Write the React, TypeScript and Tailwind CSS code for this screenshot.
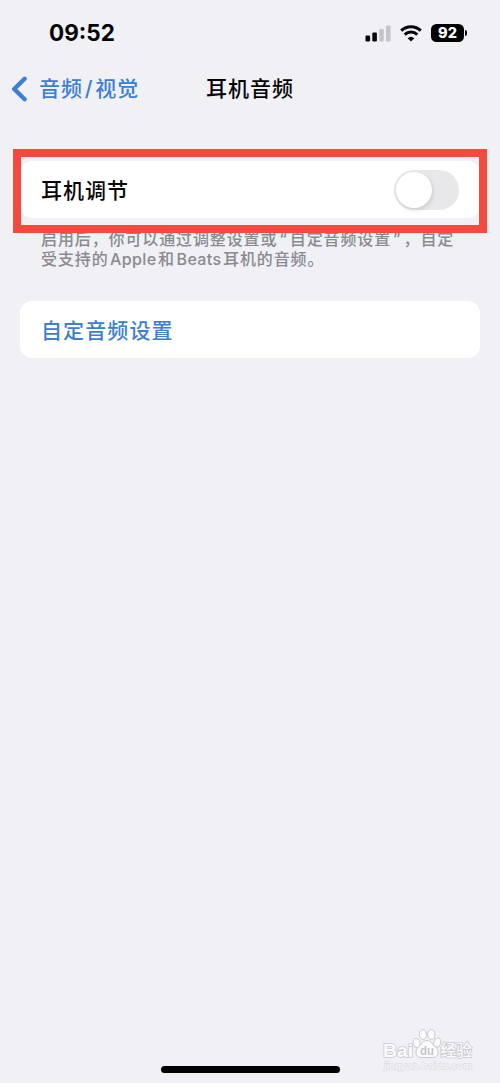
function StatusBar() {
  return (
    <div className="flex h-[66px] items-center justify-between pr-[33px] pl-[49px]">
      <span className="pt-px text-[22.5px] leading-none font-bold">09:52</span>
      <div className="flex items-center">
        <svg width="26" height="17" viewBox="0 0 26 17" className="mr-[9px]">
          <rect x="0.5" y="10.5" width="4.6" height="6" rx="1.2" fill="#05050c" />
          <rect x="7.3" y="7.5" width="4.6" height="9" rx="1.2" fill="#05050c" />
          <rect x="14.2" y="4" width="4.6" height="12.5" rx="1.2" fill="#c5c5ca" />
          <rect x="21" y="0.5" width="4.6" height="16" rx="1.2" fill="#c5c5ca" />
        </svg>
        <svg width="22" height="17" viewBox="0 0 22 17" className="mr-[9px]" fill="none" stroke="#05050c" strokeWidth="3">
          <path d="M1.2 5.6a14.2 14.2 0 0 1 19.6 0" />
          <path d="M4.7 9.6a9.2 9.2 0 0 1 12.6 0" />
          <path d="M11 16.6l3.3-3.4a4.8 4.8 0 0 0-6.6 0z" fill="#05050c" stroke="none" />
        </svg>
        <div className="flex h-[18px] w-[33px] items-center justify-center rounded-[5.5px] bg-black text-[14.5px] leading-none font-extrabold text-white">
          92
        </div>
        <span className="ml-px h-[6px] w-[2px] rounded-r-full bg-black" />
      </div>
    </div>
  );
}

function NavBar() {
  return (
    <header className="grid h-[45px] grid-cols-[1fr_auto_1fr] items-center">
      <button className="flex items-center pl-[11px] text-[#3b80d2]">
        <svg width="17" height="26" viewBox="0 0 17 26" fill="none" stroke="currentColor" strokeWidth="4.4" strokeLinecap="round" strokeLinejoin="round">
          <path d="M13.6 2.8L3.2 13l10.4 10.2" />
        </svg>
        <span className="ml-[11px] text-[21px] leading-none font-medium tracking-[1px] whitespace-nowrap">
          音频<span className="mx-[1.8px]">/</span>视觉
        </span>
      </button>
      <h1 className="text-[21px] leading-none font-medium tracking-[1px]">耳机音频</h1>
      <span />
    </header>
  );
}

function Toggle() {
  return (
    <button role="switch" aria-checked="false" className="flex h-10 w-[65px] items-center rounded-full bg-[#e8e8ea] p-[2px]">
      <span className="size-9 rounded-full bg-white shadow-[1px_2px_4px_rgba(0,0,0,0.12)]" />
    </button>
  );
}

function Watermark() {
  return (
    <div className="absolute top-[1027px] left-[382px] w-[94px]">
      <svg
        width="94"
        height="46"
        viewBox="0 0 94 46"
        fill="#fbfbfd"
        stroke="#cbcbcf"
        strokeWidth="1"
        fontFamily="'Liberation Sans', 'Noto Sans CJK SC', sans-serif"
      >
        <ellipse cx="34.6" cy="16" rx="3.4" ry="4.6" transform="rotate(-15 34.6 16)" />
        <ellipse cx="41" cy="7.5" rx="3.6" ry="5" />
        <ellipse cx="49.3" cy="7.5" rx="3.6" ry="5" />
        <ellipse cx="55.2" cy="15.5" rx="3.4" ry="4.6" transform="rotate(15 55.2 15.5)" />
        <path d="M45 13.5c-4 0-5.500 4-8.500 6.500-4 3-3.500 10.500 2.500 10.500h12c6 0 6.500-7.500 2.500-10.500C50.500 17.500 49 13.500 45 13.500z" />
        <g paintOrder="stroke" strokeWidth="1.600">
          <text x="1" y="29.5" fontSize="19" fontWeight="700" textLength="30" lengthAdjust="spacingAndGlyphs">Bai</text>
          <text x="58.5" y="28.5" fontSize="15.5" fontWeight="500" textLength="31.5" lengthAdjust="spacingAndGlyphs">经验</text>
        </g>
        <text x="2" y="41.5" fontSize="9" fill="#fafafc" stroke="#d8d8dc" strokeWidth="0.9" paintOrder="stroke" textLength="88" lengthAdjust="spacingAndGlyphs">jingyan.baidu.com</text>
        <text x="38" y="28" fontSize="13" fontWeight="700" fill="#c6c6ca" stroke="none" textLength="14" lengthAdjust="spacingAndGlyphs">du</text>
      </svg>
    </div>
  );
}

export default function App() {
  return (
    <div className="relative flex h-[1083px] w-[500px] flex-col overflow-hidden bg-[#f0f0f5] font-[Inter,'Noto_Sans_CJK_SC',sans-serif] text-[#050508]">
      <StatusBar />
      <NavBar />

      <main className="flex-1 px-5 pt-[50px]">
        <section className="relative">
          <div className="flex h-[57px] items-center justify-between rounded-xl bg-white px-[21px]">
            <span className="pt-[2px] text-[21px] leading-none font-medium tracking-[1px]">耳机调节</span>
            <Toggle />
          </div>
          <p className="mt-[11px] pl-[21px] text-[16px] leading-5 font-medium tracking-[0.88px] whitespace-nowrap text-[#8a8a8f]">
            启用后，你可以通过调整设置或<span className="mx-[2px]">“</span>自定音频设置<span className="mx-[2px]">”</span>，自定
            <br />
            受支持的<span className="mx-[1.5px] tracking-[0.4px]">Apple</span>和<span className="mx-[1.5px] tracking-[0.4px]">Beats</span>耳机的音频。
          </p>
          {/* Highlight frame around the switch row */}
          <div className="absolute -top-3 -left-[7px] h-[84px] w-[474px] border-8 border-[#f44a3e]" />
        </section>

        <button className="mt-8 flex h-[57px] w-full items-center rounded-xl bg-white pt-[2px] pl-[21px] text-[21px] leading-none font-medium tracking-[1.1px] text-[#3b80d2]">
          自定音频设置
        </button>
      </main>

      <Watermark />
      <div className="mb-[10px] h-[7px] w-[179px] self-center rounded-full bg-black" />
    </div>
  );
}
